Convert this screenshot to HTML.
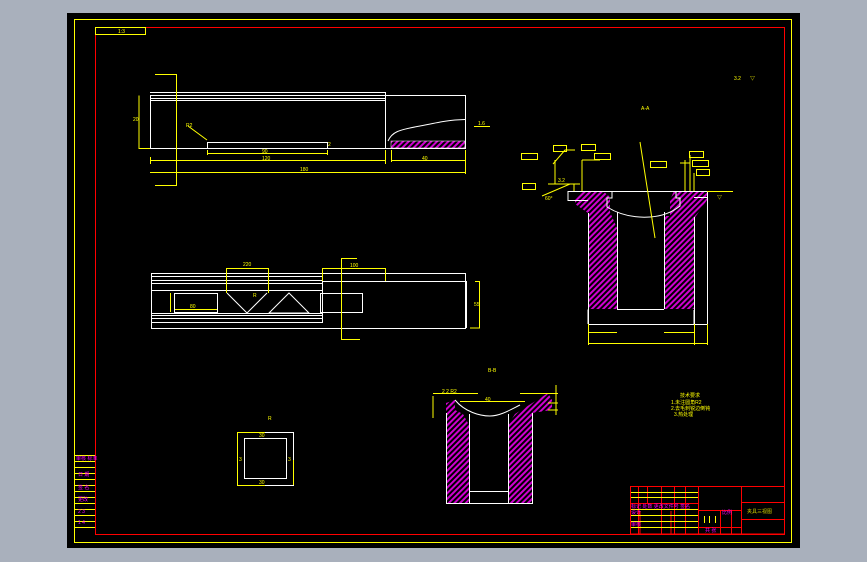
<!DOCTYPE html>
<html><head><meta charset="utf-8"><style>
html,body{margin:0;padding:0;width:867px;height:562px;overflow:hidden;background:linear-gradient(#7a8494,#c8ccd4);}
svg{display:block}
text{font-family:"Liberation Sans","Noto Sans CJK SC",sans-serif;font-size:5px;fill:#ffff00}
</style></head><body>
<svg width="867" height="562" viewBox="0 0 867 562" xmlns="http://www.w3.org/2000/svg">
<defs>
<pattern id="h" patternUnits="userSpaceOnUse" width="4" height="4" patternTransform="rotate(-45)">
<rect width="4" height="4" fill="#000"/><rect width="4" height="2" fill="#d000d0"/>
</pattern>
</defs>
<rect x="0" y="0" width="867" height="562" fill="#a9b0bc"/>
<rect x="67" y="13" width="733" height="535" fill="#000"/>
<g fill="none" stroke-width="1">
<rect x="74.5" y="19.5" width="717" height="523" stroke="#ffff00"/>
<rect x="95.5" y="27.5" width="689" height="507" stroke="#ff0000"/>
<rect x="95.5" y="27.5" width="50" height="7" stroke="#ffff00"/>
</g>
<text x="118" y="33">1:3</text>
<!-- left strip -->
<g stroke="#ffff00" fill="none">
<path d="M75 455.5H95M75 461.5H95M75 467.5H95M75 473.5H95M75 479.5H95M75 485.5H95M75 491.5H95M75 497.5H95M75 503.5H95M75 509.5H95M75 515.5H95M75 521.5H95M75 527.5H95"/>
</g>
<g fill="#ff00ff" font-size="5"><text x="76" y="460" style="fill:#f0f">审核 标准</text><text x="78" y="476" style="fill:#f0f">日 期</text><text x="78" y="489" style="fill:#f0f">签 名</text><text x="78" y="501" style="fill:#f0f">更改</text><text x="78" y="513" style="fill:#f0f">2 3</text><text x="78" y="524" style="fill:#f0f">1 4</text></g>

<!-- top view -->
<g stroke="#fff" fill="none">
<rect x="150.5" y="95.5" width="315" height="53"/>
<path d="M150 92.5H385M150 98.5H385M150 100.5H385M385.5 92V148"/>
<path d="M150 148.5H207.5V142.5H327.5V148.5"/>
<path d="M388 141C392 132 398 130 420 126C440 122 448 120 465 119.5"/>
</g>
<rect x="391" y="141" width="74" height="7" fill="url(#h)" stroke="#fff" stroke-width="0.5"/>
<g stroke="#ffff00" fill="none">
<path d="M151 160.5H385M150.5 157V164M385.5 150V164"/>
<path d="M150 172.5H465M465.5 150V174"/>
<path d="M391 160.5H465M391.5 150V162"/>
<path d="M207.5 150V155M327.5 150V155M207 153.5H327"/>
<path d="M155 74.5H176.5V185.5H155"/>
<path d="M139 95.5V148.5H150"/>
<path d="M188 126L207 140"/>
<path d="M474 126.5H490"/>
</g>
<text x="262" y="153">90</text><text x="262" y="160">120</text><text x="300" y="171">180</text><text x="422" y="160">40</text><text x="133" y="121">20</text><text x="478" y="125">1.6</text><text x="186" y="127">R2</text><text x="328" y="146">2</text>

<!-- front view -->
<g stroke="#fff" fill="none">
<rect x="151.5" y="273.5" width="314" height="55"/>
<path d="M151 276.5H322M151 280.5H322M151 283.5H322M151 290.5H322.5V281.5H465M322.5 281V322.5H151M151 318.5H322M151 315.5H322M151 313.5H322"/>
<rect x="174.5" y="293.5" width="43" height="19"/>
<path d="M227 293L247 313L267 293M269 313L289 293L309 313Z"/>
<rect x="320.5" y="293.5" width="42" height="19"/>
<path d="M466.5 281V328"/>
</g>
<g stroke="#ffff00" fill="none">
<path d="M226.5 293V268.5H268.5V293M322.5 281V268.5H385.5V281M341.5 258.5V339.5H360M341 258.5H357M170.5 293V312M175 309.5H217M475 281.5H479.5V328H470"/>
</g>
<text x="243" y="266">220</text><text x="350" y="267">100</text><text x="190" y="308">80</text><text x="474" y="306">55</text><text x="253" y="297">R</text>

<!-- right section -->
<path d="M588 213L575 204V200L583 191H603L610 197V212L617 228V309H588Z" fill="url(#h)"/>
<path d="M664 309V216H670V200L674 191H707V200L694 219V309Z" fill="url(#h)"/>
<g stroke="#fff" fill="none">
<path d="M568 191.5H707.5V324.5H588.5V213M568 191V200.5H588M612 191V198H607V207C620 215 635 218 650 217C665 216 675 210 680 206V198H676V191"/>
<path d="M617.5 212V309M664.5 212V309M617 309.5H664M588 309.5V324M694.5 217V324M694 197.5H707M694 310V324"/>
</g>
<g stroke="#ffff00" fill="none">
<path d="M588.5 324V345M694.5 324V345M707.5 324V345M588 343.5H707M588 332.5H617M664 332.5H694"/>
<path d="M707 191.5H733M574 184V191M566 184H580M548 184H574M582 160H600M582 160V191M555 160V184M640 142L655 238M690 155V191M685 160V191M694 173V191M680 163H690"/>
<path d="M542 196L570 184M553 164L565 150H575"/>
</g>
<g fill="none" stroke="#ffff00">
<rect x="521.5" y="153.5" width="16" height="6"/><rect x="522.5" y="183.5" width="13" height="6"/>
<rect x="553.5" y="145.5" width="13" height="6"/><rect x="581.5" y="144.5" width="14" height="6"/>
<rect x="594.5" y="153.5" width="16" height="6"/><rect x="650.5" y="161.5" width="16" height="6"/>
<rect x="689.5" y="151.5" width="14" height="6"/><rect x="692.5" y="160.5" width="16" height="6"/>
<rect x="696.5" y="169.5" width="13" height="6"/>
</g>
<text x="641" y="110">A-A</text><text x="734" y="80">3.2</text><text x="750" y="80">▽</text><text x="717" y="199">▽</text><text x="558" y="182">3.2</text><text x="545" y="200">60°</text>

<!-- bottom cup -->
<text x="488" y="372">B-B</text>
<path d="M446 413V403L455 400V410L463 414L469 425V503H446Z" fill="url(#h)"/>
<path d="M508 503V425L515 414L548 393L552 400V410L532 413V503Z" fill="url(#h)"/>
<g stroke="#fff" fill="none">
<path d="M446.5 413V503.5H532.5V413M469.5 414V503M508.5 414V503M469 491.5H508M455 400C465 412 480 416 490 416C500 416 510 410 520 405"/>
</g>
<g stroke="#ffff00" fill="none">
<path d="M433 393.5H478M520 393.5H558M460 401.5H525M433 396V418M556 385V415M548 403H558M548 410H558"/>
</g>
<text x="442" y="393">2 2 R2</text><text x="485" y="401">40</text>
<text x="268" y="420">R</text>
<!-- square -->
<g stroke="#fff" fill="none"><rect x="237.5" y="432.5" width="56" height="53"/><rect x="244.5" y="438.5" width="42" height="40"/></g>
<path d="M237.5 485V432.5H265M237.5 460V485.5H265M293.5 460V485" stroke="#ffff00" fill="none"/>
<text x="259" y="437">30</text><text x="259" y="484">30</text><text x="239" y="461">3</text><text x="288" y="461">3</text>

<!-- notes -->
<text x="680" y="397">技术要求</text><text x="671" y="404">1.未注圆角R2</text><text x="671" y="410">2.去毛刺锐边倒钝</text><text x="674" y="416">3.热处理</text>

<!-- title block -->
<g stroke="#ff0000" fill="none">
<path d="M630.5 534V486.5H784.5M630.5 534H784.5M698.5 486V534M741.5 486V534M741 502.5H784M741 519.5H784M698 510.5H741M720.5 510V534M731.5 510V534M698 527.5H741"/>
<path d="M638.5 486V534M647.5 486V503M661.5 486V534M674.5 486V534M685.5 486V534M630 503.5H698M671 511V534M640 511V534"/>
</g>
<g stroke="#ffff00" fill="none"><path d="M631 492.5H698M631 497.5H698M631 509.5H698M631 515.5H698M631 521.5H698M631 527.5H698M704.5 516V523M709.5 516V523M715.5 516V523"/></g>
<g><text x="631" y="508" style="fill:#f0f">标记 处数 更改文件号 签名</text><text x="631" y="514" style="fill:#f0f">设计</text><text x="631" y="526" style="fill:#f0f">审核</text><text x="722" y="514" style="fill:#f0f">比例</text><text x="705" y="532" style="fill:#f0f">共 张</text><text x="747" y="513" style="fill:#cccc00">夹具三视图</text></g>
</svg>
</body></html>
